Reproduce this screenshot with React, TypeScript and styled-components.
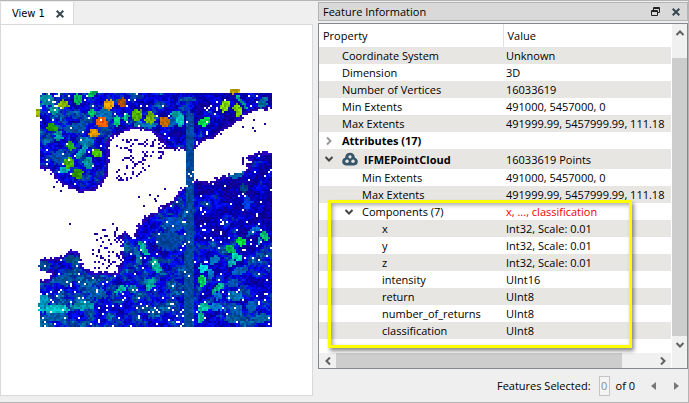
import React from "react";
import styled, { createGlobalStyle } from "styled-components";

const GlobalStyle = createGlobalStyle`
  *, *::before, *::after { box-sizing: border-box; }
  body { margin: 0; background: #efefef; }
  button, input, table { font: inherit; color: inherit; }
`;

/* ---------- point cloud drawing ---------- */

type Pt = [number, number];

const upper: Pt[] = [
  [40, 93], [272, 93], [272, 109], [256, 111], [247, 114], [236, 123], [225, 130], [213, 138],
  [203, 142], [197, 148], [187, 150], [165, 149], [163, 142], [157, 136], [150, 132], [137, 129],
  [125, 132], [113, 137], [109, 143], [109, 165], [107, 177], [101, 185], [95, 190], [80, 193],
  [70, 188], [58, 182], [50, 171], [40, 168],
];
const lower: Pt[] = [
  [272, 152], [257, 152], [242, 159], [252, 161], [242, 164], [250, 168], [242, 172], [222, 177],
  [209, 182], [197, 180], [187, 184], [180, 190], [172, 201], [163, 206], [155, 212], [145, 218],
  [137, 228], [134, 237], [127, 232], [122, 233], [122, 263], [117, 272], [92, 272], [84, 267],
  [80, 252], [70, 250], [58, 258], [40, 259], [40, 272], [52, 273], [48, 280], [40, 279],
  [40, 326], [272, 326],
];

/* x, y, half width, half height, tilt in degrees, colour */
type Blob = [number, number, number, number, number, string];
const blobs: Blob[] = [
  [38, 113, 3, 4, 0, "#a0b400"], [64, 104, 5, 4, 0, "#86bc00"], [78, 99, 4, 6, 0, "#00c058"],
  [92, 94, 6, 3, -15, "#00cc60"], [54, 110, 5, 5, 0, "#00a0a0"], [47, 100, 7, 6, 0, "#0090a8"],
  [92, 113, 4, 4, 0, "#00cc78"], [109, 105, 5, 5, 0, "#e8a000"], [122, 103, 4, 5, 0, "#b45400"],
  [102, 122, 6, 5, 30, "#ff6000"], [117, 121, 3, 5, 0, "#00d478"], [126, 117, 3, 4, 0, "#00c888"],
  [137, 115, 5, 6, 0, "#58c000"], [150, 118, 5, 6, 0, "#70bc00"], [52, 128, 5, 4, 0, "#20a400"],
  [59, 136, 4, 5, 0, "#00a0a0"], [94, 133, 5, 4, 0, "#e09800"], [71, 146, 4, 4, 0, "#20b420"],
  [97, 153, 5, 4, 0, "#50cc00"], [82, 152, 3, 8, 40, "#0098a8"], [69, 163, 5, 5, 0, "#48c000"],
  [64, 170, 5, 3, 0, "#00b8c8"], [78, 174, 5, 5, 0, "#309c00"], [88, 163, 5, 6, 0, "#0098a0"],
  [85, 142, 6, 5, 20, "#0080b8"], [76, 128, 12, 5, -15, "#0050b0"], [104, 114, 8, 6, 0, "#0070b8"],
  [165, 122, 5, 5, 0, "#c06800"], [176, 114, 5, 3, 0, "#00b0b0"], [180, 120, 4, 6, 0, "#00ccc0"],
  [205, 122, 6, 4, -25, "#00f050"], [225, 106, 4, 6, 35, "#80dc00"], [238, 110, 4, 6, -20, "#80dc00"],
  [235, 91, 5, 3, 0, "#d0b000"], [242, 102, 2, 9, -40, "#00a8a0"], [263, 103, 4, 6, 30, "#0070a8"],
  [145, 125, 12, 3, 0, "#0078b8"], [172, 122, 5, 5, 0, "#0060b8"], [60, 157, 10, 7, 0, "#0050b8"],
  [143, 248, 3, 9, -32, "#00b098"], [156, 266, 4, 8, -20, "#00b498"], [151, 284, 4, 7, 35, "#00b0a0"],
  [121, 289, 6, 3, -20, "#00b8a0"], [44, 302, 5, 8, 0, "#0098c0"], [54, 309, 16, 4, 0, "#00c0c8"],
  [83, 306, 12, 4, 0, "#0098b0"], [138, 256, 3, 10, -15, "#0070a8"], [133, 289, 5, 4, 0, "#0080a8"],
  [202, 281, 4, 6, 0, "#00dc60"], [203, 268, 5, 4, 0, "#00d8e0"], [215, 260, 6, 4, -35, "#0078c0"],
  [231, 249, 5, 4, 30, "#00b850"], [241, 242, 5, 4, 0, "#00f040"], [237, 257, 5, 4, 30, "#00dcb8"],
  [232, 263, 5, 3, -30, "#00b0c0"], [265, 236, 4, 5, -20, "#00c870"], [260, 241, 3, 3, 0, "#0098c0"],
  [218, 288, 8, 3, -35, "#00c098"], [204, 307, 6, 4, 0, "#00c4a8"], [201, 317, 4, 5, 0, "#00b898"],
  [235, 296, 8, 5, 0, "#0078c0"], [253, 231, 8, 3, -35, "#0068d8"], [216, 307, 6, 4, 0, "#0080d8"],
  [210, 274, 3, 5, 0, "#0080c8"], [240, 271, 8, 4, -20, "#0060c0"], [233, 283, 6, 4, 0, "#0058c0"],
  [236, 309, 7, 5, 0, "#0060b8"], [251, 307, 5, 5, 0, "#0060b8"], [262, 318, 8, 4, 0, "#0068b0"],
  [232, 319, 7, 4, 0, "#0060a8"], [218, 296, 4, 4, 0, "#0070d0"], [45, 266, 6, 5, 0, "#004898"],
  [73, 260, 7, 4, 0, "#005890"], [247, 203, 4, 8, 0, "#0040f0"], [173, 224, 9, 7, 30, "#0050c0"],
  [236, 175, 8, 3, -10, "#0068b0"], [244, 188, 3, 4, 0, "#004898"], [65, 280, 8, 6, 0, "#0058a8"],
  [97, 293, 10, 6, 20, "#0060b8"], [168, 241, 12, 10, 0, "#0048a8"], [56, 317, 12, 4, 0, "#0060b0"],
];

const inside = (x: number, y: number, poly: Pt[]) => {
  let hit = false;
  for (let i = 0, j = poly.length - 1; i < poly.length; j = i++) {
    const [xi, yi] = poly[i];
    const [xj, yj] = poly[j];
    if (yi > y !== yj > y && x < ((xj - xi) * (y - yi)) / (yj - yi) + xi) hit = !hit;
  }
  return hit;
};

const edgeDistance = (x: number, y: number, poly: Pt[]) => {
  let best = 999;
  for (let i = 0, j = poly.length - 1; i < poly.length; j = i++) {
    const [ax, ay] = poly[j];
    const [bx, by] = poly[i];
    const outerEdge = (ax === bx && (ax === 272 || ax === 40)) || (ay === by && (ay === 93 || ay === 326));
    if (outerEdge) continue;
    const dx = bx - ax;
    const dy = by - ay;
    const t = Math.max(0, Math.min(1, ((x - ax) * dx + (y - ay) * dy) / (dx * dx + dy * dy)));
    best = Math.min(best, Math.hypot(x - ax - t * dx, y - ay - t * dy));
  }
  return best;
};

const mix = (n: number) => {
  n = Math.imul(n ^ (n >>> 16), 0x85ebca6b);
  n = Math.imul(n ^ (n >>> 13), 0xc2b2ae35);
  return n ^ (n >>> 16);
};

const hash = (x: number, y: number) => (mix(mix(x + 0x9e3779b9) + y * 31) >>> 0) / 4294967296;

const smooth = (x: number, y: number) => {
  const ix = Math.floor(x);
  const iy = Math.floor(y);
  const fx = x - ix;
  const fy = y - iy;
  const a = hash(ix, iy) * (1 - fx) + hash(ix + 1, iy) * fx;
  const b = hash(ix, iy + 1) * (1 - fx) + hash(ix + 1, iy + 1) * fx;
  return a * (1 - fy) + b * fy;
};

const shade = (hex: string, f: number) =>
  "#" + [1, 3, 5].map((i) => {
    const v = Math.min(255, Math.round(parseInt(hex.slice(i, i + 2), 16) * f));
    return v.toString(16).padStart(2, "0");
  }).join("");

const blobAt = (x: number, y: number) =>
  blobs.find(([bx, by, rx, ry, tilt]) => {
    const a = (tilt * Math.PI) / 180;
    const dx = x - bx;
    const dy = y - by;
    const u = (dx * Math.cos(a) + dy * Math.sin(a)) / rx;
    const v = (dy * Math.cos(a) - dx * Math.sin(a)) / ry;
    return u * u + v * v < 0.7 + 0.7 * hash(x + 7, y);
  });

const buildCloud = () => {
  const layers: Record<string, string> = {};
  const put = (x: number, y: number, colour: string) => {
    layers[colour] = (layers[colour] || "") + `M${x} ${y}h2v2h-2z`;
  };
  const levels = [0.8, 0.9, 1, 1.1];
  for (let y = 89; y < 326; y += 2) {
    for (let x = 34; x < 272; x += 2) {
      const r = hash(x, y);
      const q = hash(x + 991, y + 37);
      const level = levels[Math.floor(q * 4)];
      const jx = x + 1 + (hash(x + 300, y) - 0.5) * 3;
      const jy = y + 1 + (hash(x, y + 300) - 0.5) * 3;
      const within = x >= 40 && y >= 93;
      const cx = Math.max(40.5, Math.min(271.5, jx));
      const cy = Math.max(93.5, Math.min(325.5, jy));
      const poly = !within ? null : inside(cx, cy, upper) ? upper : inside(cx, cy, lower) ? lower : null;
      const stripLeft = y > 250 ? 184 : 186;
      const onStrip = x >= stripLeft && x < 194 && y > 112;
      const blob = blobAt(x + 1, y + 1);
      if (!poly && !onStrip) {
        if (blob && (x < 40 || y < 93)) put(x, y, shade(blob[5], level));
        else if (x > 114 && x < 160 && y > 138 && y < 182 && x + y > 260 && x + y < 314 && r < 0.2)
          put(x, y, q < 0.5 ? "#2600b8" : "#1d008c");
        else if (x > 90 && x < 122 && y > 225 && y < 268 && x + y > 326 && r < 0.24)
          put(x, y, q < 0.5 ? "#2600b8" : "#18007c");
        else if (x > 140 && x < 164 && y > 140 && y < 160 && r < 0.3) put(x, y, "#2a00b0");
        continue;
      }
      let gap = 0.02;
      if (y > 280 && x < 184) gap = 0.05;
      if (x < 62 && y < 112) gap = 0.14;
      if (x > 192 && x < 224 && y > 205 && y < 262) gap = 0.07;
      if (y > 104 && y < 116 && x > 203 && x < 218) gap = 0.25;
      if (r < gap) continue;
      if (blob) {
        put(x, y, shade(blob[5], level));
        continue;
      }
      if (onStrip) {
        put(x, y, shade("#004ca4", level));
        continue;
      }
      const d = edgeDistance(x + 1, y + 1, poly as Pt[]);
      const n = smooth(x / 9, y / 7) * 0.6 + smooth(x / 4 + 90, y / 3) * 0.4;
      const lift =
        y > 268 && x < 184 ? 0.1 : x < 110 && y < 180 ? 0.05 : x > 195 && y < 240 ? -0.16 : 0;
      const v = n + lift + (q - 0.5) * 0.14;
      let base = "#0000d8";
      if (d < 3) base = "#2800b8";
      else if (v < 0.24) base = "#1000a8";
      else if (v < 0.4) base = "#0000bc";
      else if (v < 0.52) base = "#0000e0";
      else if (v < 0.6) base = "#0010fa";
      else if (v < 0.71) base = "#0034b4";
      else if (v < 0.8) base = "#0050a0";
      else base = "#0070b0";
      put(x, y, shade(base, level));
    }
  }
  const strays: Pt[] = [
    [242, 126], [253, 119], [264, 123], [252, 127], [254, 130], [53, 186], [60, 190], [69, 223],
    [112, 223], [143, 205], [138, 196], [149, 194], [154, 198], [157, 195], [164, 188], [155, 200],
  ];
  strays.forEach(([x, y]) => put(x, y, "#140c84"));
  return Object.entries(layers);
};

const cloud = buildCloud();

const PointCloud = () => (
  <CloudSvg viewBox="34 86 240 242" shapeRendering="crispEdges" role="img" aria-label="Point cloud">
    {cloud.map(([fill, d]) => (
      <path key={fill} fill={fill} d={d} />
    ))}
  </CloudSvg>
);

/* ---------- styles ---------- */

const Window = styled.div`
  min-height: 100vh;
  display: grid;
  grid-template-columns: minmax(0, 313fr) minmax(0, 370fr);
  column-gap: 5px;
  padding-top: 1px;
  border-top: 1px solid #b4b4b4;
  border-right: 1px solid #b4b4b4;
  border-bottom: 1px solid #b4b4b4;
  background: #efefef;
  color: #000;
  font: 11px/17px "Open Sans", "Noto Sans", sans-serif;
`;
const ViewPane = styled.section`
  display: flex;
  flex-direction: column;
  padding-bottom: 6px;
`;
const TabStrip = styled.div`
  display: flex;
`;
const Tab = styled.div`
  display: flex;
  align-items: center;
  gap: 11px;
  height: 23px;
  padding: 0 9px 0 11px;
  margin-bottom: -1px;
  background: #fff;
  border: solid #d9d9d9;
  border-width: 0 1px;
`;
const PlainButton = styled.button`
  display: flex;
  align-items: center;
  justify-content: center;
  padding: 0;
  border: 0;
  background: none;
`;
const TabLabel = styled(PlainButton)`
  font: 11px/16px "DejaVu Sans Condensed", "DejaVu Sans", sans-serif;
`;
const Canvas = styled.div`
  flex: 1;
  padding: 61px 0 0 33px;
  border: 1px solid #d9d9d9;
  background: #fff;
`;
const CloudSvg = styled.svg`
  display: block;
  width: 240px;
  height: 242px;
`;
const InfoPane = styled.section`
  display: flex;
  flex-direction: column;
`;
const TitleBar = styled.header`
  display: flex;
  align-items: center;
  gap: 12px;
  height: 19px;
  padding: 0 7px 0 4px;
  margin-bottom: 2px;
  border: 1px solid #b4b4b4;
  background: #d9d9d9;
`;
const Title = styled.h1`
  flex: 1;
  margin: 0;
  font: inherit;
  line-height: 17px;
`;
const Frame = styled.div`
  position: relative;
  flex: 1;
  display: grid;
  grid-template-columns: minmax(0, 1fr) 15px;
  grid-template-rows: minmax(0, 1fr) 15px;
  column-gap: 1px;
  border: 1px solid #828790;
  background: #fff;
`;
const Table = styled.table`
  width: 100%;
  align-self: start;
  table-layout: fixed;
  border-collapse: collapse;
`;
const HeadCell = styled.th<{ $value?: boolean }>`
  width: ${(p) => (p.$value ? "auto" : "184px")};
  height: 23px;
  padding: 0 4px;
  border-left: ${(p) => (p.$value ? "1px solid #e0e0e0" : "0")};
  font-weight: 400;
  text-align: left;
`;
const Row = styled.tr<{ $shaded: boolean; $tall?: boolean }>`
  height: ${(p) => (p.$tall ? "20px" : "17px")};
  background: ${(p) => (p.$shaded ? "#e8e6e2" : "#fff")};
`;
const Cell = styled.td<{ $red?: boolean }>`
  padding: 0 0 0 3px;
  white-space: nowrap;
  color: ${(p) => (p.$red ? "#f00000" : "inherit")};
`;
const NameLine = styled.div<{ $level: number; $bold?: boolean }>`
  display: flex;
  align-items: center;
  padding-left: ${(p) => p.$level * 20}px;
  font-weight: ${(p) => (p.$bold ? 700 : 400)};
`;
const Twist = styled(PlainButton)`
  width: 14px;
  height: 14px;
  margin-right: 6px;
`;
const NoTwist = styled.span`
  width: 20px;
`;
const CloudIcon = styled.svg`
  margin-right: 6px;
`;
const VScroll = styled.div`
  display: flex;
  flex-direction: column;
  background: #f0f0f0;
`;
const HScroll = styled.div`
  display: flex;
  background: #f0f0f0;
`;
const Corner = styled.div`
  background: #f0f0f0;
`;
const ScrollButton = styled(PlainButton)`
  width: 17px;
  height: 17px;
  max-width: 100%;
`;
const Thumb = styled.div`
  flex: 1;
  background: #cdcdcd;
`;
const VThumb = styled(Thumb)`
  margin-top: 17px;
`;
const HThumb = styled(Thumb)`
  margin-right: 32px;
`;
const HScrollButton = styled(ScrollButton)`
  height: 15px;
`;
const Highlight = styled.div`
  position: absolute;
  top: 176px;
  left: 9px;
  right: 55px;
  bottom: 20px;
  border: 3px solid #ff0;
  box-shadow: 2px 3px 4px rgba(0, 0, 0, 0.45), inset 2px 2px 4px rgba(0, 0, 0, 0.35);
  pointer-events: none;
`;
const StatusBar = styled.footer`
  display: flex;
  align-items: center;
  justify-content: flex-end;
  height: 33px;
  padding: 0 4px 0 0;
`;
const Count = styled.input`
  width: 11px;
  height: 20px;
  padding: 0;
  margin: 0 6px 0 8px;
  border: 1px solid #c4c4c4;
  background: #f4f4f4;
  color: #8c8c8c;
  text-align: center;
`;
const StepButtons = styled.div`
  display: flex;
  gap: 7px;
  margin-left: 10px;
`;
const StepButton = styled(PlainButton)`
  width: 16px;
  height: 16px;
`;

/* ---------- icons ---------- */

const CloseIcon = () => (
  <svg width="8" height="8" viewBox="0 0 8 8" stroke="#37474f" strokeWidth="2">
    <path d="M.7 .7 7.3 7.3M7.3 .7 .7 7.3" />
  </svg>
);

const turns = { up: 180, down: 0, left: 90, right: 270 };
const Chevron = ({ to, color = "#444" }: { to: keyof typeof turns; color?: string }) => (
  <svg width="10" height="10" viewBox="0 0 10 10" fill="none" stroke={color} strokeWidth="2">
    <path d="M1.5 3 5 6.5 8.5 3" transform={`rotate(${turns[to]} 5 5)`} />
  </svg>
);

const PointCloudIcon = () => (
  <CloudIcon width="16" height="14" viewBox="0 0 16 14" aria-hidden="true">
    <path
      fill="#37566b"
      d="M4 13.500A4 4 0 0 1 .2 9.600C.2 7.500 1.500 6.200 3.100 5.700 3.200 2.600 5.200.7 8 .7s4.800 1.900 4.900 5c1.700.5 2.900 1.900 2.900 3.900a4 4 0 0 1-3.900 3.900z"
    />
    <g fill="#e8e6e2">
      <circle cx="8" cy="4.800" r="1.600" />
      <circle cx="5" cy="9.300" r="1.700" />
      <circle cx="11" cy="9.300" r="1.700" />
    </g>
  </CloudIcon>
);

/* ---------- data ---------- */

type Item = {
  name: string;
  value?: string;
  level: number;
  open?: boolean;
  bold?: boolean;
  icon?: boolean;
  red?: boolean;
};

const items: Item[] = [
  { name: "Coordinate System", value: "Unknown", level: 0 },
  { name: "Dimension", value: "3D", level: 0 },
  { name: "Number of Vertices", value: "16033619", level: 0 },
  { name: "Min Extents", value: "491000, 5457000, 0", level: 0 },
  { name: "Max Extents", value: "491999.99, 5457999.99, 111.18", level: 0 },
  { name: "Attributes (17)", level: 0, open: false, bold: true },
  { name: "IFMEPointCloud", value: "16033619 Points", level: 0, open: true, bold: true, icon: true },
  { name: "Min Extents", value: "491000, 5457000, 0", level: 1 },
  { name: "Max Extents", value: "491999.99, 5457999.99, 111.18", level: 1 },
  { name: "Components (7)", value: "x, ..., classification", level: 1, open: true, red: true },
  { name: "x", value: "Int32, Scale: 0.01", level: 2 },
  { name: "y", value: "Int32, Scale: 0.01", level: 2 },
  { name: "z", value: "Int32, Scale: 0.01", level: 2 },
  { name: "intensity", value: "UInt16", level: 2 },
  { name: "return", value: "UInt8", level: 2 },
  { name: "number_of_returns", value: "UInt8", level: 2 },
  { name: "classification", value: "UInt8", level: 2 },
];

export default function App() {
  return (
    <Window>
      <GlobalStyle />
      <ViewPane>
        <TabStrip>
          <Tab>
            <TabLabel>View 1</TabLabel>
            <PlainButton aria-label="Close view">
              <CloseIcon />
            </PlainButton>
          </Tab>
        </TabStrip>
        <Canvas>
          <PointCloud />
        </Canvas>
      </ViewPane>
      <InfoPane>
        <TitleBar>
          <Title>Feature Information</Title>
          <PlainButton aria-label="Float panel">
            <svg width="9" height="9" viewBox="0 0 9 9" fill="none" stroke="#222">
              <path d="M2.500 3.500V.5h6v5h-2M2 1.500h7M.5 3.500h6v5h-6zM0 4.500h7" />
            </svg>
          </PlainButton>
          <PlainButton aria-label="Close panel">
            <CloseIcon />
          </PlainButton>
        </TitleBar>
        <Frame>
          <Table>
            <thead>
              <tr>
                <HeadCell>Property</HeadCell>
                <HeadCell $value>Value</HeadCell>
              </tr>
            </thead>
            <tbody>
              {items.map((item, i) => (
                <Row key={i} $shaded={i % 2 === 0} $tall={item.icon}>
                  <Cell>
                    <NameLine $level={item.level} $bold={item.bold}>
                      {item.open === undefined ? (
                        <NoTwist />
                      ) : (
                        <Twist aria-label={`Toggle ${item.name}`} aria-expanded={item.open}>
                          <Chevron to={item.open ? "down" : "right"} color={item.open ? "#444" : "#999"} />
                        </Twist>
                      )}
                      {item.icon && <PointCloudIcon />}
                      {item.name}
                    </NameLine>
                  </Cell>
                  <Cell $red={item.red}>{item.value}</Cell>
                </Row>
              ))}
            </tbody>
          </Table>
          <VScroll>
            <ScrollButton aria-label="Scroll up">
              <Chevron to="up" color="#606060" />
            </ScrollButton>
            <VThumb />
            <ScrollButton aria-label="Scroll down">
              <Chevron to="down" color="#606060" />
            </ScrollButton>
          </VScroll>
          <HScroll>
            <HScrollButton aria-label="Scroll left">
              <Chevron to="left" color="#606060" />
            </HScrollButton>
            <HThumb />
            <HScrollButton aria-label="Scroll right">
              <Chevron to="right" color="#606060" />
            </HScrollButton>
          </HScroll>
          <Corner />
          <Highlight />
        </Frame>
        <StatusBar>
          <label htmlFor="selected">Features Selected:</label>
          <Count id="selected" defaultValue="0" />
          <span>of 0</span>
          <StepButtons>
            <StepButton aria-label="Previous feature">
              <svg width="5" height="8" viewBox="0 0 5 8" fill="#777">
                <path d="M5 0v8L0 4z" />
              </svg>
            </StepButton>
            <StepButton aria-label="Next feature">
              <svg width="5" height="8" viewBox="0 0 5 8" fill="#777">
                <path d="M0 0v8l5-4z" />
              </svg>
            </StepButton>
          </StepButtons>
        </StatusBar>
      </InfoPane>
    </Window>
  );
}
